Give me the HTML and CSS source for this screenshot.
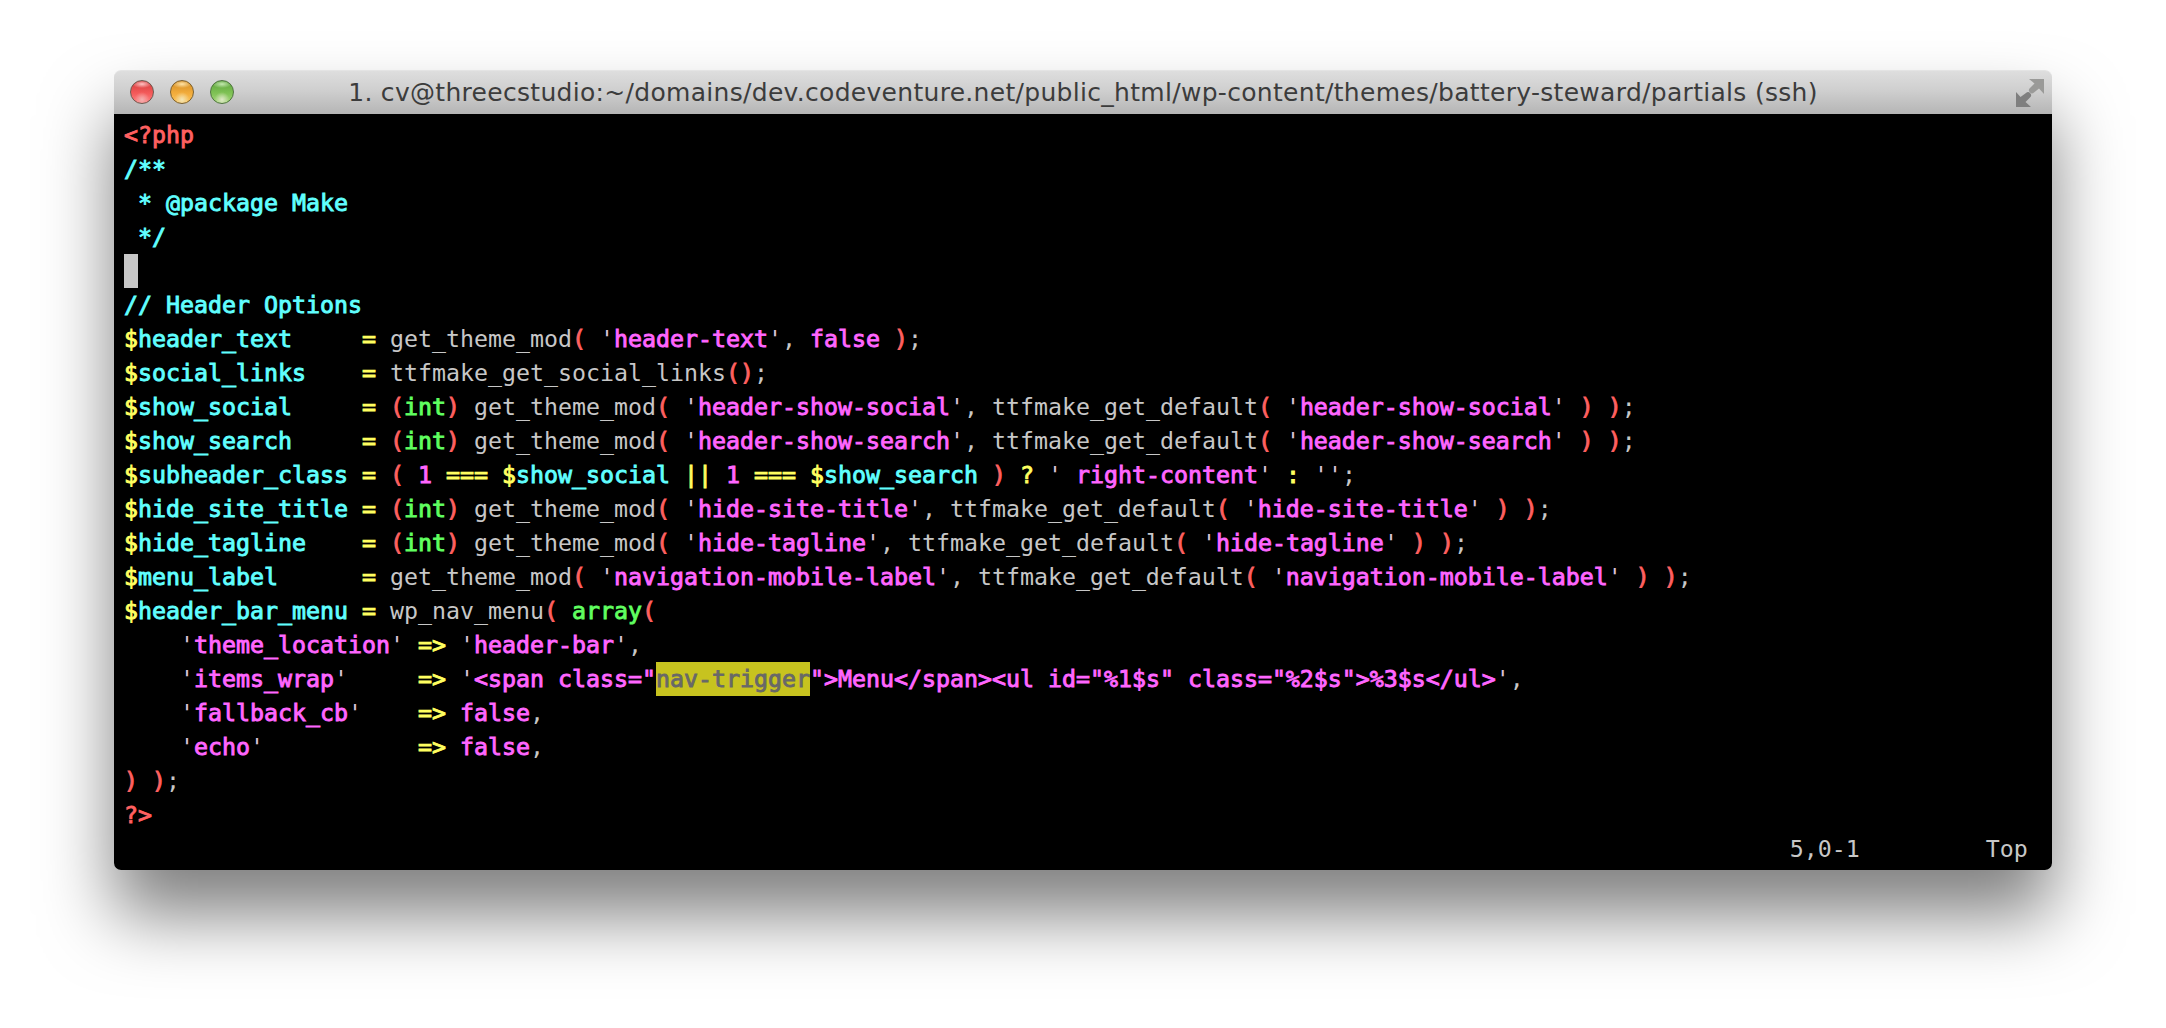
FILE: index.html
```html
<!DOCTYPE html>
<html lang="en">
<head>
<meta charset="utf-8">
<title>Terminal</title>
<link rel="stylesheet" href="styles.css">
</head>
<body>
<main class="window">
<header class="titlebar">
<div class="lights"><span class="light red"></span><span class="light amber"></span><span class="light green"></span></div>
<h1 class="title">1. cv@threecstudio:~/domains/dev.codeventure.net/public_html/wp-content/themes/battery-steward/partials (ssh)</h1>
<svg class="expand" viewBox="0 0 28 28" width="28" height="28" aria-hidden="true"><path class="expand-up" d="M13 0H28V15L23 9.5L18 13.5A3 3 0 0 1 14 9L18.5 4.5Z"/><path class="expand-down" d="M0 13L4.5 18L10 14A3 3 0 0 1 14 18.5L9.5 23L15 28H0Z"/></svg>
</header>
<pre class="term"><span class="r">&lt;?php</span>
<span class="c">/**</span>
<span class="c"> * @package Make</span>
<span class="c"> */</span>
<span class="cursor"> </span>
<span class="c">// Header Options</span>
<span class="y">$</span><span class="c">header_text</span>     <span class="y">=</span> get_theme_mod<span class="r">(</span> <span class="q">'</span><span class="m">header-text</span><span class="q">'</span>, <span class="m">false</span> <span class="r">)</span>;
<span class="y">$</span><span class="c">social_links</span>    <span class="y">=</span> ttfmake_get_social_links<span class="r">()</span>;
<span class="y">$</span><span class="c">show_social</span>     <span class="y">=</span> <span class="r">(</span><span class="g">int</span><span class="r">)</span> get_theme_mod<span class="r">(</span> <span class="q">'</span><span class="m">header-show-social</span><span class="q">'</span>, ttfmake_get_default<span class="r">(</span> <span class="q">'</span><span class="m">header-show-social</span><span class="q">'</span> <span class="r">)</span> <span class="r">)</span>;
<span class="y">$</span><span class="c">show_search</span>     <span class="y">=</span> <span class="r">(</span><span class="g">int</span><span class="r">)</span> get_theme_mod<span class="r">(</span> <span class="q">'</span><span class="m">header-show-search</span><span class="q">'</span>, ttfmake_get_default<span class="r">(</span> <span class="q">'</span><span class="m">header-show-search</span><span class="q">'</span> <span class="r">)</span> <span class="r">)</span>;
<span class="y">$</span><span class="c">subheader_class</span> <span class="y">=</span> <span class="r">(</span> <span class="m">1</span> <span class="y">===</span> <span class="y">$</span><span class="c">show_social</span> <span class="y">||</span> <span class="m">1</span> <span class="y">===</span> <span class="y">$</span><span class="c">show_search</span> <span class="r">)</span> <span class="y">?</span> <span class="q">'</span><span class="m"> right-content</span><span class="q">'</span> <span class="y">:</span> <span class="q">''</span>;
<span class="y">$</span><span class="c">hide_site_title</span> <span class="y">=</span> <span class="r">(</span><span class="g">int</span><span class="r">)</span> get_theme_mod<span class="r">(</span> <span class="q">'</span><span class="m">hide-site-title</span><span class="q">'</span>, ttfmake_get_default<span class="r">(</span> <span class="q">'</span><span class="m">hide-site-title</span><span class="q">'</span> <span class="r">)</span> <span class="r">)</span>;
<span class="y">$</span><span class="c">hide_tagline</span>    <span class="y">=</span> <span class="r">(</span><span class="g">int</span><span class="r">)</span> get_theme_mod<span class="r">(</span> <span class="q">'</span><span class="m">hide-tagline</span><span class="q">'</span>, ttfmake_get_default<span class="r">(</span> <span class="q">'</span><span class="m">hide-tagline</span><span class="q">'</span> <span class="r">)</span> <span class="r">)</span>;
<span class="y">$</span><span class="c">menu_label</span>      <span class="y">=</span> get_theme_mod<span class="r">(</span> <span class="q">'</span><span class="m">navigation-mobile-label</span><span class="q">'</span>, ttfmake_get_default<span class="r">(</span> <span class="q">'</span><span class="m">navigation-mobile-label</span><span class="q">'</span> <span class="r">)</span> <span class="r">)</span>;
<span class="y">$</span><span class="c">header_bar_menu</span> <span class="y">=</span> wp_nav_menu<span class="r">(</span> <span class="g">array</span><span class="r">(</span>
    <span class="q">'</span><span class="m">theme_location</span><span class="q">'</span> <span class="y">=&gt;</span> <span class="q">'</span><span class="m">header-bar</span><span class="q">'</span>,
    <span class="q">'</span><span class="m">items_wrap</span><span class="q">'</span>     <span class="y">=&gt;</span> <span class="q">'</span><span class="m">&lt;span class="</span><span class="match">nav-trigger</span><span class="m">"&gt;Menu&lt;/span&gt;&lt;ul id="%1$s" class="%2$s"&gt;%3$s&lt;/ul&gt;</span><span class="q">'</span>,
    <span class="q">'</span><span class="m">fallback_cb</span><span class="q">'</span>    <span class="y">=&gt;</span> <span class="m">false</span>,
    <span class="q">'</span><span class="m">echo</span><span class="q">'</span>           <span class="y">=&gt;</span> <span class="m">false</span>,
<span class="r">) )</span>;
<span class="r">?&gt;</span>
                                                                                                                       5,0-1         Top</pre>
</main>
</body>
</html>
```
FILE: styles.css
```css
html, body {
  margin: 0;
  background: #fff;
}

body {
  padding: 70px 114px 0;
  overflow: hidden;
  height: 1028px;
  box-sizing: border-box;
}

.window {
  height: 800px;
  border-radius: 7px;
  box-shadow: 0 45px 70px rgba(0, 0, 0, 0.5);
  display: flex;
  flex-direction: column;
}

.titlebar {
  height: 44px;
  flex: none;
  box-sizing: border-box;
  display: grid;
  grid-template-columns: 1fr auto 1fr;
  align-items: center;
  border-radius: 7px 7px 0 0;
  border-top: 1px solid #e4e4e4;
  background: linear-gradient(#dedede, #cfcfcf 45%, #b5b5b5);
}

.lights {
  display: flex;
  gap: 16px;
  padding-left: 16px;
  margin-top: -2px;
}

.light {
  width: 24px;
  height: 24px;
  box-sizing: border-box;
  border-radius: 50%;
  border: 1px solid #6b5a50;
}

.red {
  background:
    radial-gradient(circle at 50% 85%, #f3b0b0 0, rgba(243, 176, 176, 0) 35%),
    radial-gradient(ellipse 45% 18% at 50% 14%, #ffc4c4 0, rgba(255, 196, 196, 0) 100%),
    linear-gradient(#d23c3c, #f45a5a 55%, #ff8080);
}

.amber {
  background:
    radial-gradient(circle at 50% 85%, #f3e6b8 0, rgba(243, 230, 184, 0) 35%),
    radial-gradient(ellipse 45% 18% at 50% 14%, #ffe4a8 0, rgba(255, 228, 168, 0) 100%),
    linear-gradient(#d18b22, #f2ac3c 55%, #fbc45a);
  border-color: #7a6030;
}

.green {
  background:
    radial-gradient(circle at 50% 85%, #dfe8c8 0, rgba(223, 232, 200, 0) 35%),
    radial-gradient(ellipse 45% 18% at 50% 14%, #c4e8b0 0, rgba(196, 232, 176, 0) 100%),
    linear-gradient(#5da33c, #7fc255 55%, #a4d678);
  border-color: #4f7440;
}

.title {
  margin: 0;
  font: 400 25px/1 "DejaVu Sans", sans-serif;
  letter-spacing: 0.3px;
  color: #3c3c3c;
  white-space: nowrap;
}

.expand {
  justify-self: end;
  margin-right: 8px;
}

.expand-up {
  fill: #9a9a98;
}

.expand-down {
  fill: #7f7f7f;
}

.term {
  flex: 1;
  margin: 0;
  padding: 4px 10px;
  background: #000;
  border-radius: 0 0 7px 7px;
  color: #c7c7c7;
  font: 400 23.25px/34px "DejaVu Sans Mono", monospace;
}

.r, .c, .y, .m, .g, .match {
  -webkit-text-stroke: 0.9px currentColor;
}

.r { color: #ff6060; }
.c { color: #60ffff; }
.y { color: #ffff60; }
.m { color: #ff66ff; }
.g { color: #60ff60; }
.q { color: #d8c0d8; }

.cursor, .match {
  display: inline-block;
  vertical-align: top;
}

.cursor {
  background: #c7c7c7;
}

.match {
  background: #c7c31f;
  color: #686868;
}
```
